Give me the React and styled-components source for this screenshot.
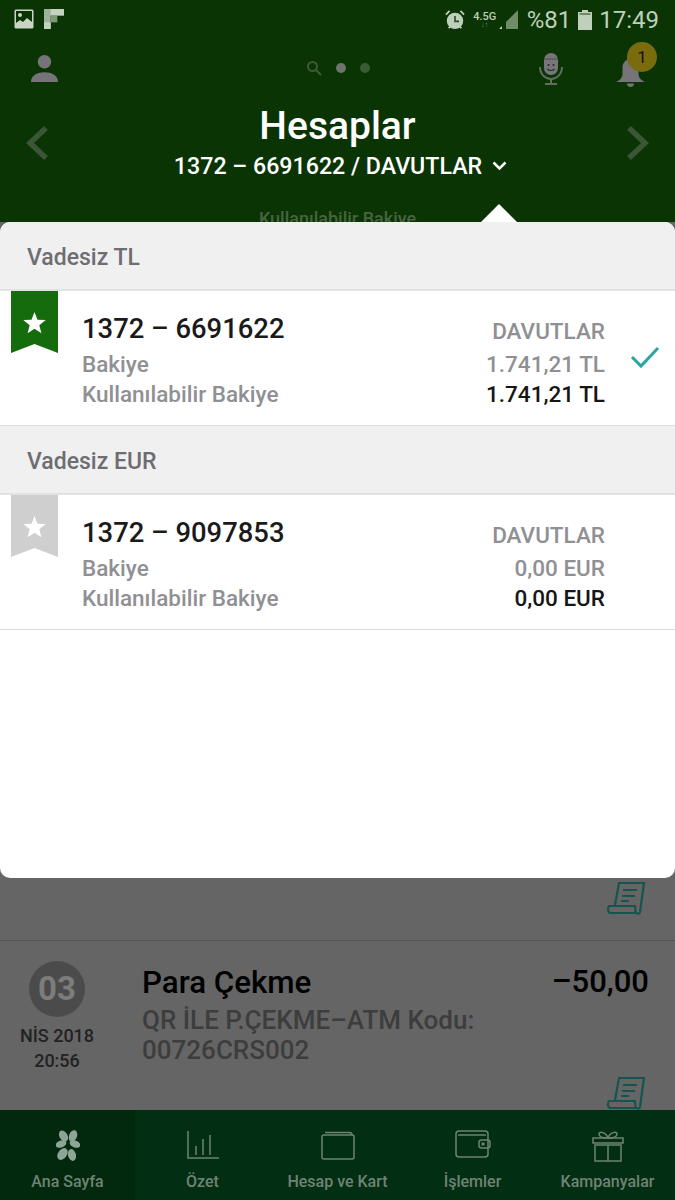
import React from "react";
import styled, { createGlobalStyle } from "styled-components";

const GlobalStyle = createGlobalStyle`
  html, body {
    margin: 0;
    padding: 0;
    background: #656565;
  }
  * {
    box-sizing: border-box;
  }
`;

const Screen = styled.div`
  position: relative;
  width: 675px;
  height: 1200px;
  overflow: hidden;
  display: flex;
  flex-direction: column;
  font-family: Roboto, "Liberation Sans", sans-serif;
  background: #656565;
`;

/* header */
const Header = styled.header`
  height: 222px;
  flex: none;
  background: #0a3404;
  overflow: hidden;
  display: flex;
  flex-direction: column;
`;

const StatusBar = styled.div`
  height: 38px;
  flex: none;
  padding: 7px 16px 0 14px;
  display: flex;
  align-items: flex-start;
  color: #bfd0ba;
`;

const StatusLeft = styled.div`
  display: flex;
  gap: 10px;
  margin-top: 2px;
  flex: 1;
`;

const StatusRight = styled.div`
  display: flex;
  align-items: center;
  font-size: 24px;
  line-height: 26px;
`;

const NetLabel = styled.div`
  width: 24px;
  margin: 0 2px 0 8px;
  font-size: 11px;
  line-height: 11px;
  font-weight: 500;
  text-align: center;
`;

const Arrows = styled.div`
  font-size: 7px;
  line-height: 7px;
  opacity: 0.6;
`;

const Percent = styled.span`
  margin-left: 8px;
`;

const BatterySlot = styled.span`
  margin: 0 7px 0 7px;
  line-height: 0;
`;

const TopRow = styled.div`
  height: 58px;
  flex: none;
  padding: 16px 29px 0 30px;
  display: grid;
  grid-template-columns: 1fr auto 1fr;
  align-items: start;
`;

const TopRight = styled.div`
  justify-self: end;
  width: 107px;
  display: flex;
  justify-content: space-between;
  align-items: flex-start;
`;

const MicSlot = styled.div`
  margin-top: -2px;
  line-height: 0;
`;

const Pager = styled.div`
  display: flex;
  align-items: center;
  gap: 14px;
  margin-top: 6px;
`;

const Dot = styled.span`
  width: 10px;
  height: 10px;
  border-radius: 50%;
  background: ${(p) => (p.$active ? "#6f756d" : "#3b5a36")};
`;

const BellBox = styled.div`
  position: relative;
  width: 31px;
  height: 31px;
  margin-top: 3px;
`;

const Badge = styled.span`
  position: absolute;
  top: -15px;
  right: -11px;
  width: 30px;
  height: 30px;
  border-radius: 50%;
  background: #7a6c0c;
  color: #111;
  font-size: 17px;
  line-height: 30px;
  text-align: center;
`;

const TitleRow = styled.div`
  flex: none;
  display: flex;
  align-items: flex-start;
  justify-content: space-between;
  padding: 0 24px 0 24px;
`;

const ChevronSlot = styled.div`
  margin-top: 29px;
  line-height: 0;
`;

const TitleBlock = styled.div`
  text-align: center;
  color: #fff;
`;

const Title = styled.div`
  font-size: 39px;
  line-height: 42px;
  font-weight: 500;
  margin-top: 9px;
`;

const Subtitle = styled.div`
  font-size: 23.2px;
  line-height: 28px;
  font-weight: 500;
  margin: 5px 0 0 6px;
  display: flex;
  align-items: center;
  gap: 10px;
`;

const Peek = styled.div`
  margin-top: 28px;
  font-size: 18px;
  line-height: 22px;
  color: #47633f;
  font-weight: 500;
`;

/* content behind the sheet */
const Content = styled.main`
  flex: 1;
  display: flex;
  flex-direction: column;
  min-height: 0;
  overflow: hidden;
`;

const Tx = styled.div`
  height: 719px;
  flex: none;
  display: flex;
  justify-content: flex-end;
  align-items: flex-end;
  padding: 0 29px 25px 0;
  border-bottom: 1px solid #555;
  line-height: 0;
`;

const TxRow = styled.div`
  flex: 1;
  position: relative;
  display: grid;
  grid-template-columns: 114px 1fr auto;
  padding: 20px 26px 0 0;
`;

const DateCol = styled.div`
  display: flex;
  flex-direction: column;
  align-items: center;
  color: #222;
  font-size: 18px;
  line-height: 25px;
  font-weight: 500;
`;

const DateCircle = styled.div`
  width: 56px;
  height: 56px;
  margin: 0 0 6px;
  border-radius: 50%;
  background: #4b4b4b;
  color: #7c7c7c;
  font-size: 33px;
  line-height: 56px;
  font-weight: 700;
  text-align: center;
`;

const TxBody = styled.div`
  padding: 0 0 0 28px;
`;

const TxTitle = styled.div`
  font-size: 31.3px;
  line-height: 44px;
  font-weight: 500;
  color: #000;
`;

const TxText = styled.div`
  font-size: 26px;
  line-height: 30px;
  font-weight: 500;
  color: #3d3d3d;
  white-space: nowrap;
`;

const TxAmount = styled.div`
  font-size: 31px;
  line-height: 42px;
  font-weight: 500;
  color: #000;
`;

const ReceiptSlot = styled.div`
  position: absolute;
  right: 29px;
  bottom: 0;
  line-height: 0;
`;

/* bottom tabs */
const Tabs = styled.nav`
  height: 90px;
  flex: none;
  display: grid;
  grid-template-columns: repeat(5, 135px);
  background: #022f13;
`;

const Tab = styled.div`
  background: ${(p) => (p.$active ? "#02280d" : "transparent")};
  display: flex;
  flex-direction: column;
  align-items: center;
  padding-top: 20px;
  color: #6f8374;
  font-size: 16px;
  font-weight: 500;
`;

const TabIcon = styled.div`
  height: 36px;
  line-height: 0;
`;

const TabLabel = styled.div`
  margin-top: 6px;
  line-height: 20px;
  white-space: nowrap;
`;

/* account sheet */
const Sheet = styled.section`
  position: absolute;
  top: 222px;
  left: 0;
  right: 0;
  height: 656px;
  background: #fff;
  border-radius: 10px;
`;

const Caret = styled.div`
  position: absolute;
  top: -18px;
  left: 481px;
  width: 0;
  height: 0;
  border-left: 18px solid transparent;
  border-right: 18px solid transparent;
  border-bottom: 18px solid #fff;
`;

const SectionHead = styled.div`
  height: 69px;
  padding: 3px 0 0 27px;
  display: flex;
  align-items: center;
  background: #f0f0f0;
  border-bottom: 2px solid #e2e2e2;
  border-radius: ${(p) => (p.$first ? "10px 10px 0 0" : "0")};
  color: #6d6d72;
  font-size: 23px;
  font-weight: 500;
`;

const Account = styled.div`
  position: relative;
  height: 135px;
  display: flex;
  padding: 20px 0 0 82px;
  border-bottom: 1px solid #dedede;
`;

const Ribbon = styled.div`
  position: absolute;
  top: 0;
  left: 11px;
  line-height: 0;
`;

const AccountInfo = styled.div`
  flex: 1;
`;

const AccountNumber = styled.div`
  font-size: 27.4px;
  line-height: 36px;
  margin-bottom: 2px;
  font-weight: 500;
  color: #1a1a1a;
`;

const Muted = styled.div`
  font-size: 22.5px;
  line-height: 30px;
  font-weight: 500;
  color: ${(p) => (p.$dark ? "#161616" : "#909094")};
`;

const Owner = styled(Muted)`
  padding-top: 5px;
  margin-bottom: 3px;
`;

const AccountSide = styled.div`
  width: 200px;
  margin-right: 70px;
  text-align: right;
`;

const CheckSlot = styled.div`
  position: absolute;
  top: 54px;
  left: 630px;
  line-height: 0;
`;

const ImageIcon = () => (
  <svg width="20" height="20" viewBox="0 0 20 20">
    <rect x="0.5" y="0.5" width="19" height="19" rx="1.5" fill="#c9d6c5" />
    <rect x="2" y="2" width="16" height="15" fill="#0a3404" />
    <circle cx="6" cy="6" r="2" fill="#c9d6c5" />
    <path d="M2 14l4-3 3 2 4-4 5 4v4H2z" fill="#c9d6c5" />
  </svg>
);

const FlipIcon = () => (
  <svg width="20" height="20" viewBox="0 0 18 18">
    <rect x="0" y="0" width="18" height="6" fill="#c4d2c0" />
    <rect x="0" y="0" width="6" height="18" fill="#9fb39a" />
    <rect x="6" y="6" width="6" height="6" fill="#7f9878" />
    <rect x="0" y="12" width="6" height="6" fill="#c4d2c0" />
  </svg>
);

const AlarmIcon = () => (
  <svg width="20" height="20" viewBox="0 0 22 22">
    <circle cx="11" cy="12" r="9" fill="#bfd0ba" />
    <path d="M11 6.500V12.500H15.500" fill="none" stroke="#2c4f27" strokeWidth="1.800" />
    <path d="M1 5l4-4M21 5l-4-4" stroke="#bfd0ba" strokeWidth="2" />
    <path d="M4 20l2-2M18 20l-2-2" stroke="#bfd0ba" strokeWidth="2" />
  </svg>
);

const SignalIcon = () => (
  <svg width="20" height="22" viewBox="0 0 20 22">
    <path d="M0 20h3v-3z" fill="#bfd0ba" />
    <path d="M7 20V13L19 1V20z" fill="#6f8c69" />
  </svg>
);

const BatteryIcon = () => (
  <svg width="14" height="20" viewBox="0 0 14 20">
    <path d="M4 0h6v2h4v18H0V2h4z" fill="#bfd0ba" />
    <rect x="1.500" y="3" width="11" height="2" fill="#6f8c69" />
  </svg>
);

const UserIcon = () => (
  <svg width="29" height="29" viewBox="0 0 30 30" fill="#777479">
    <circle cx="15" cy="8" r="7" />
    <path d="M1 29c0-7 7-10 14-10s14 3 14 10z" />
  </svg>
);

const SearchIcon = () => (
  <svg width="16" height="16" viewBox="0 0 16 16" fill="none" stroke="#3f5b3a" strokeWidth="2">
    <circle cx="6.500" cy="6.500" r="4.500" />
    <path d="M10 10l5 5" />
  </svg>
);

const MicIcon = () => (
  <svg width="24" height="34" viewBox="0 0 24 34">
    <rect x="5" y="1" width="14" height="22" rx="7" fill="#77767a" />
    <path d="M5 7h14" stroke="#5a5a5e" strokeWidth="1.500" />
    <circle cx="9.500" cy="13" r="1" fill="#1f2a1c" />
    <circle cx="14.500" cy="13" r="1" fill="#1f2a1c" />
    <path d="M8.500 17c2 2 5 2 7 0" fill="none" stroke="#1f2a1c" strokeWidth="1.200" />
    <path d="M1 15c0 7 5 12 11 12s11-5 11-12" fill="none" stroke="#5f6f5c" strokeWidth="2" />
    <path d="M12 27v4M6 32h12" stroke="#5f6f5c" strokeWidth="2" />
  </svg>
);

const BellIcon = () => (
  <svg width="31" height="31" viewBox="0 0 31 31" fill="#777479">
    <path d="M15.500 2c-5 0-8 4-8 9v6c0 3-2 6-6.500 8h29c-4.500-2-6.500-5-6.500-8v-6c0-5-3-9-8-9z" />
    <path d="M12 26.500h7c0 2-1.500 3.500-3.500 3.500s-3.500-1.500-3.500-3.500z" />
  </svg>
);

const Chevron = ({ dir }) => (
  <svg width="26" height="36" viewBox="0 0 26 36" fill="none" stroke="#3a5635" strokeWidth="5.500">
    <path d={dir === "left" ? "M22 3L6 18l16 15" : "M4 3l16 15L4 33"} />
  </svg>
);

const SmallChevron = () => (
  <svg width="15" height="10" viewBox="0 0 15 10" fill="none" stroke="#fff" strokeWidth="2.500">
    <path d="M1.500 1.500l6 6 6-6" />
  </svg>
);

const Bookmark = ({ color }) => (
  <svg width="47" height="62" viewBox="0 0 47 62">
    <path d="M0 0h47v62l-23.500-9L0 62z" fill={color} />
    <path
      d="M23.500 21l3 7.700 8.200.4-6.400 5.200 2.100 8-6.900-4.500-6.900 4.500 2.100-8-6.400-5.200 8.200-.4z"
      fill="#fff"
    />
  </svg>
);

const Check = () => (
  <svg width="30" height="24" viewBox="0 0 30 24" fill="none" stroke="#2aa5a5" strokeWidth="3">
    <path d="M2 12l9 9L28 3" />
  </svg>
);

const Receipt = () => (
  <svg width="40" height="34" viewBox="0 0 40 34" fill="none" stroke="#14564f" strokeWidth="2.200">
    <path d="M9 24L13 2h25l-4 29c-.500 2.500-4 2-4.500-.5L29 25H3c-2 3-1 7 2 7h26" />
    <path d="M17 9h14M16 15h13M15 20h8" strokeWidth="1.800" />
  </svg>
);

const Clover = () => (
  <svg width="24" height="32" viewBox="0 0 24 32" fill="#8da595">
    <ellipse cx="7.500" cy="6" rx="4" ry="6" transform="rotate(-30 7.500 6)" />
    <ellipse cx="17" cy="6" rx="4" ry="6" transform="rotate(20 17 6)" />
    <ellipse cx="5" cy="14" rx="3.500" ry="5.500" transform="rotate(70 5 14)" />
    <ellipse cx="19" cy="14" rx="3.500" ry="5.500" transform="rotate(-70 19 14)" />
    <ellipse cx="6.500" cy="24" rx="4.500" ry="6.500" transform="rotate(35 6.500 24)" />
    <ellipse cx="16" cy="25" rx="4" ry="6" transform="rotate(-15 16 25)" />
  </svg>
);

const tabStroke = { fill: "none", stroke: "#6f8374", strokeWidth: 1.5 };

const ChartIcon = () => (
  <svg width="34" height="30" viewBox="0 0 34 30" {...tabStroke}>
    <path d="M2 1v27h31M10 16v9M17 9v16M24 5v20" />
  </svg>
);

const CardsIcon = () => (
  <svg width="34" height="30" viewBox="0 0 34 30" {...tabStroke}>
    <rect x="1" y="5" width="32" height="24" rx="2" />
    <path d="M4 2.500h24c2 0 3 1 3 2.500" />
  </svg>
);

const WalletIcon = () => (
  <svg width="36" height="28" viewBox="0 0 36 28" {...tabStroke}>
    <rect x="1" y="1" width="32" height="26" rx="3" />
    <path d="M3 5h28" />
    <rect x="24" y="10" width="11" height="8" rx="2.500" />
    <circle cx="28" cy="14" r="1" />
  </svg>
);

const GiftIcon = () => (
  <svg width="32" height="32" viewBox="0 0 32 32" {...tabStroke}>
    <rect x="1" y="8" width="30" height="5" />
    <rect x="3" y="15" width="26" height="16" />
    <path d="M16 15v16M16 8c-2-6-9-7-9-4s5 4 9 4zM16 8c2-6 9-7 9-4s-5 4-9 4z" />
  </svg>
);

const tabs = [
  { label: "Ana Sayfa", icon: <Clover />, active: true },
  { label: "Özet", icon: <ChartIcon /> },
  { label: "Hesap ve Kart", icon: <CardsIcon /> },
  { label: "İşlemler", icon: <WalletIcon /> },
  { label: "Kampanyalar", icon: <GiftIcon /> },
];

const accounts = [
  {
    section: "Vadesiz TL",
    number: "1372 – 6691622",
    balance: "1.741,21 TL",
    color: "#146c0c",
    selected: true,
  },
  {
    section: "Vadesiz EUR",
    number: "1372 – 9097853",
    balance: "0,00 EUR",
    color: "#cfcfcf",
  },
];

export default function App() {
  return (
    <Screen>
      <GlobalStyle />
      <Header>
        <StatusBar>
          <StatusLeft>
            <ImageIcon />
            <FlipIcon />
          </StatusLeft>
          <StatusRight>
            <AlarmIcon />
            <NetLabel>
              4.5G
              <Arrows>↓↑</Arrows>
            </NetLabel>
            <SignalIcon />
            <Percent>%81</Percent>
            <BatterySlot>
              <BatteryIcon />
            </BatterySlot>
            <span>17:49</span>
          </StatusRight>
        </StatusBar>
        <TopRow>
          <UserIcon />
          <Pager>
            <SearchIcon />
            <Dot $active />
            <Dot />
          </Pager>
          <TopRight>
            <MicSlot>
              <MicIcon />
            </MicSlot>
            <BellBox>
              <BellIcon />
              <Badge>1</Badge>
            </BellBox>
          </TopRight>
        </TopRow>
        <TitleRow>
          <ChevronSlot>
            <Chevron dir="left" />
          </ChevronSlot>
          <TitleBlock>
            <Title>Hesaplar</Title>
            <Subtitle>
              1372 – 6691622 / DAVUTLAR
              <SmallChevron />
            </Subtitle>
            <Peek>Kullanılabilir Bakiye</Peek>
          </TitleBlock>
          <ChevronSlot>
            <Chevron dir="right" />
          </ChevronSlot>
        </TitleRow>
      </Header>

      <Content>
        <Tx>
          <Receipt />
        </Tx>
        <TxRow>
          <DateCol>
            <DateCircle>03</DateCircle>
            <div>NİS 2018</div>
            <div>20:56</div>
          </DateCol>
          <TxBody>
            <TxTitle>Para Çekme</TxTitle>
            <TxText>QR İLE P.ÇEKME–ATM Kodu:</TxText>
            <TxText>00726CRS002</TxText>
          </TxBody>
          <TxAmount>–50,00</TxAmount>
          <ReceiptSlot>
            <Receipt />
          </ReceiptSlot>
        </TxRow>
      </Content>

      <Tabs>
        {tabs.map((t) => (
          <Tab key={t.label} $active={t.active}>
            <TabIcon>{t.icon}</TabIcon>
            <TabLabel>{t.label}</TabLabel>
          </Tab>
        ))}
      </Tabs>

      <Sheet>
        <Caret />
        {accounts.map((a, i) => (
          <div key={a.number}>
            <SectionHead $first={i === 0}>{a.section}</SectionHead>
            <Account>
              <Ribbon>
                <Bookmark color={a.color} />
              </Ribbon>
              <AccountInfo>
                <AccountNumber>{a.number}</AccountNumber>
                <Muted>Bakiye</Muted>
                <Muted>Kullanılabilir Bakiye</Muted>
              </AccountInfo>
              <AccountSide>
                <Owner>DAVUTLAR</Owner>
                <Muted>{a.balance}</Muted>
                <Muted $dark>{a.balance}</Muted>
              </AccountSide>
              {a.selected && (
                <CheckSlot>
                  <Check />
                </CheckSlot>
              )}
            </Account>
          </div>
        ))}
      </Sheet>
    </Screen>
  );
}
